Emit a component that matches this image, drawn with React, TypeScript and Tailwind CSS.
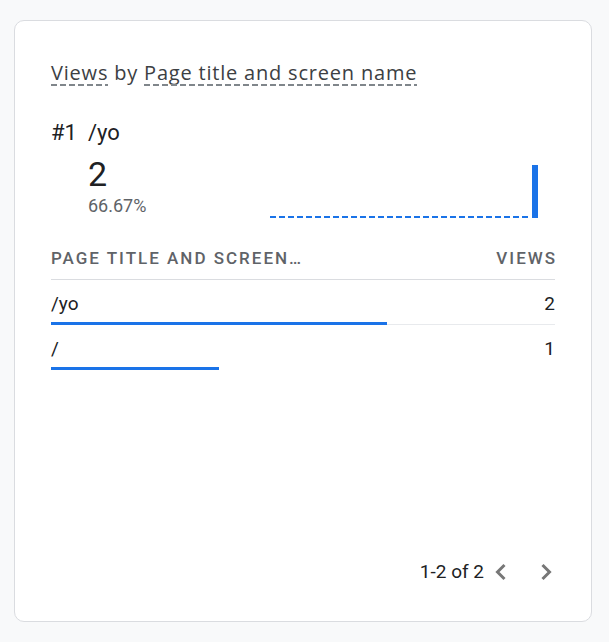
import React from "react";

function Dashed({ children }: { children: React.ReactNode }) {
  return (
    <span className="inline-flex flex-col">
      <span>{children}</span>
      <span className="h-[2px] -mt-[3px] bg-[repeating-linear-gradient(to_right,#80868b_0_6px,transparent_6px_9px)]"></span>
    </span>
  );
}

export default function App() {
  const rows = [
    { name: "/yo", views: 2, pct: 66.67 },
    { name: "/", views: 1, pct: 33.33 },
  ];
  return (
    <div className="min-h-[642px] w-[609px] bg-[#f8f9fa] pt-[20px] pl-[14px]" style={{ fontFamily: "Roboto, 'Liberation Sans', sans-serif" }}>
      <div className="w-[578px] h-[602px] bg-white border border-[#dadce0] rounded-[10px] flex flex-col px-[36px]">
        <div className="pt-[38px] h-[66px] text-[20px] leading-[28px] tracking-[0.8px] text-[#3c4043] flex" style={{ fontFamily: "'Open Sans', Roboto, sans-serif" }}>
          <Dashed>Views</Dashed>
          <span className="whitespace-pre"> by </span>
          <Dashed>Page title and screen name</Dashed>
        </div>
        <div className="mt-[34px] flex gap-[11px] text-[22px] leading-[24px] text-[#202124]">
          <span>#1</span>
          <span>/yo</span>
        </div>
        <div className="flex items-end">
          <div className="pl-[37px] w-[219px]">
            <div className="text-[34px] leading-[38px] text-[#202124] mt-[10px]">2</div>
            <div className="text-[18px] leading-[24px] mt-[1px] text-[#5f6368]">66.67%</div>
          </div>
          <svg width="268" height="53" viewBox="0 0 268 53" className="block">
            <line x1="0" y1="52" x2="261" y2="52" stroke="#1a73e8" strokeWidth="2" strokeDasharray="6 3" />
            <rect x="262" y="0" width="6" height="53" fill="#1a73e8" />
          </svg>
        </div>
        <div className="mt-[19px] flex justify-between items-center h-[43px] pt-[1px] border-b border-[#dadce0] text-[17px] font-medium tracking-[2px] text-[#5f6368]">
          <span>PAGE TITLE AND SCREEN…</span>
          <span className="-mr-[2px]">VIEWS</span>
        </div>
        {rows.map((r, i) => (
          <div key={i} className={i === 0 ? "border-b border-[#e8eaed]" : ""}>
            <div className="flex justify-between items-center h-[42px] pt-[5px] text-[19px] leading-[24px] text-[#202124]">
              <span>{r.name}</span>
              <span>{r.views}</span>
            </div>
            <div className={i === 0 ? "h-[3px] -mb-[1px] relative bg-[#1a73e8]" : "h-[3px] bg-[#1a73e8]"} style={{ width: `${r.pct}%` }}></div>
          </div>
        ))}
        <div className="flex-1"></div>
        <div className="flex justify-end items-center pb-[35px] text-[19px] leading-[28px] text-[#202124]">
          <span>1-2 of 2</span>
          <svg className="ml-[6px]" width="24" height="24" viewBox="0 0 24 24" fill="none" stroke="#777777" strokeWidth="3">
            <polyline points="14.5,5 7.5,12 14.5,19" />
          </svg>
          <svg className="ml-[20px] -mr-[3px]" width="24" height="24" viewBox="0 0 24 24" fill="none" stroke="#777777" strokeWidth="3">
            <polyline points="8.5,5 15.5,12 8.5,19" />
          </svg>
        </div>
      </div>
    </div>
  );
}
